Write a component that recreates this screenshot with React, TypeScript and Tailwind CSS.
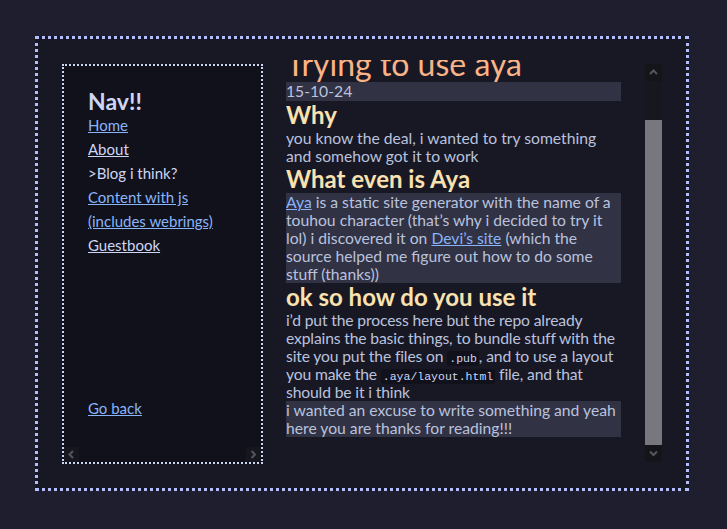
import React from "react";

function Chevron({ dir }: { dir: "up" | "down" | "left" | "right" }) {
  const d =
    dir === "up"
      ? "M1 5 L4.5 1.5 L8 5"
      : dir === "down"
      ? "M1 1.5 L4.5 5 L8 1.5"
      : dir === "left"
      ? "M5 1 L1.5 4.5 L5 8"
      : "M1.5 1 L5 4.5 L1.5 8";
  const w = dir === "up" || dir === "down" ? 9 : 7;
  const h = dir === "up" || dir === "down" ? 7 : 9;
  return (
    <svg width={w} height={h} viewBox={`0 0 ${w} ${h}`} fill="none">
      <path d={d} stroke="#55555f" strokeWidth="2" />
    </svg>
  );
}

function Code({ children }: { children: React.ReactNode }) {
  return (
    <span className="bg-[#11111b] text-[#cdd6f4] font-['Liberation_Mono',monospace] text-[11.5px] tracking-normal leading-none px-[2px] py-[1px] rounded-[3px]">
      {children}
    </span>
  );
}

export default function App() {
  return (
    <div className="w-full h-[529px] bg-[#1e1e2e] pt-[36px] pl-[35px] font-[Lato,sans-serif] text-[15.7px] text-[#bac2de]">
      <div className="w-[654px] h-[455px] border-[3px] border-dotted border-[#b4befe] bg-[#181825] pt-[25px] pl-[24px] pr-[24px] pb-[24px] flex gap-[23px]">
        {/* sidebar */}
        <nav className="w-[201px] h-[400px] shrink-0 border-2 border-dotted border-[#cdd6f4] bg-[#11111b] flex flex-col text-[15px]">
          <div className="flex-1 flex flex-col pt-[24px] pl-[24px] pr-[24px] pb-[27px]">
            <h2 className="text-[23px] leading-none font-bold text-[#cdd6f4]">Nav!!</h2>
            <ul className="leading-[24px]">
              <li><a className="text-[#89b4fa] underline">Home</a></li>
              <li><a className="text-[#cdd6f4] underline">About</a></li>
              <li className="text-[#cdd6f4]">&gt;Blog i think?</li>
              <li><a className="text-[#89b4fa] underline">Content with js (includes webrings)</a></li>
              <li><a className="text-[#cdd6f4] underline">Guestbook</a></li>
            </ul>
            <a className="mt-auto leading-[24px] text-[#89b4fa] underline">Go back</a>
          </div>
          <div className="h-[15px] flex justify-between">
            <div className="w-[15px] h-[15px] bg-[#16161e] flex items-center justify-center"><Chevron dir="left" /></div>
            <div className="w-[15px] h-[15px] bg-[#16161e] flex items-center justify-center"><Chevron dir="right" /></div>
          </div>
        </nav>

        {/* main */}
        <main className="flex-1 flex items-start gap-[24px]">
          <div className="w-[335px] h-[402px] -mt-[4px] overflow-hidden">
            <h1 className="text-[32px] leading-[30px] text-[#fab387] -mt-[11px] mb-[3px]">Trying to use aya</h1>
            <p className="bg-[#313244] leading-[19px]">15-10-24</p>
            <h2 className="text-[24px] leading-[28px] font-bold text-[#f9e2af]">Why</h2>
            <p className="leading-[18px]">you know the deal, i wanted to try something and somehow got it to work</p>
            <h2 className="text-[24px] leading-[28px] font-bold text-[#f9e2af]">What even is Aya</h2>
            <p className="leading-[18px] bg-[#313244]">
              <a className="text-[#89b4fa] underline">Aya</a> is a static site generator with the name of a touhou character (that’s why i decided to try it lol) i discovered it on{" "}
              <a className="text-[#89b4fa] underline">Devi’s site</a> (which the source helped me figure out how to do some stuff (thanks))
            </p>
            <h2 className="text-[24px] leading-[28px] font-bold text-[#f9e2af]">ok so how do you use it</h2>
            <p className="leading-[18px] tracking-[-0.15px]">
              i’d put the process here but the repo already explains the basic things, to bundle stuff with the site you put the files on <Code>.pub</Code>, and to use a layout you make the <Code>.aya/layout.html</Code> file, and that should be it i think
            </p>
            <p className="leading-[18px] bg-[#313244]">i wanted an excuse to write something and yeah here you are thanks for reading!!!</p>
          </div>
          <div className="w-[17px] h-[398px] bg-[#17171f] flex flex-col">
            <div className="h-[17px] bg-[#141419] flex items-center justify-center"><Chevron dir="up" /></div>
            <div className="flex-1 pt-[39px]">
              <div className="h-[325px] bg-[#78777d]" />
            </div>
            <div className="h-[17px] bg-[#141419] flex items-center justify-center"><Chevron dir="down" /></div>
          </div>
        </main>
      </div>
    </div>
  );
}
